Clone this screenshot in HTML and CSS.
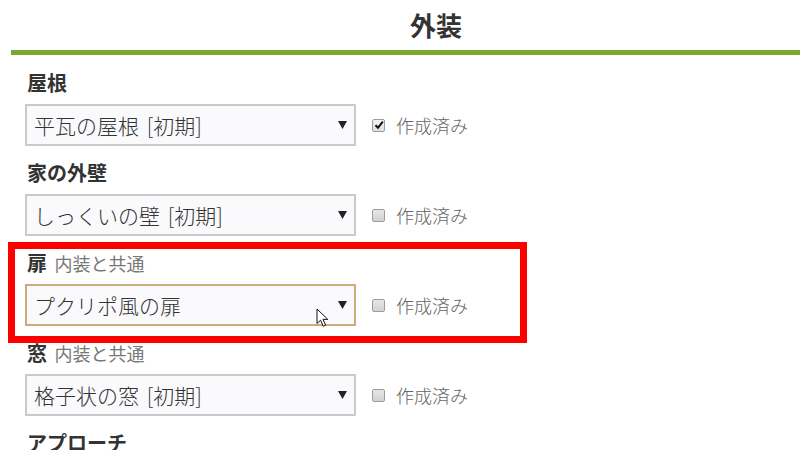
FILE: index.html
```html
<!DOCTYPE html>
<html lang="ja">
<head>
    <meta charset="UTF-8" />
    <title>外装</title>
    <link rel="stylesheet" href="styles.css">
</head>
<body>

    <div class="page">
        <h1 class="title">外装</h1>
        <div class="rule"></div>

        <div class="list">

            <div class="item">
                <div class="label">屋根</div>
                <div class="row">
                    <div class="select">
                        <span class="value">平瓦の屋根 [初期]</span>
                        <svg class="arrow" width="9" height="8" viewBox="0 0 9 8"><polygon points="0,0 9,0 4.5,8" /></svg>
                    </div>
                    <label class="check">
                        <span class="box checked">
                            <svg width="10" height="10" viewBox="0 0 10 10"><path d="M1.5 5.2 L4 7.8 L8.8 1.6" /></svg>
                        </span>
                        作成済み
                    </label>
                </div>
            </div>

            <div class="item">
                <div class="label">家の外壁</div>
                <div class="row">
                    <div class="select">
                        <span class="value">しっくいの壁 [初期]</span>
                        <svg class="arrow" width="9" height="8" viewBox="0 0 9 8"><polygon points="0,0 9,0 4.5,8" /></svg>
                    </div>
                    <label class="check">
                        <span class="box"></span>
                        作成済み
                    </label>
                </div>
            </div>

            <div class="item highlight">
                <div class="label">扉 <span class="note">内装と共通</span></div>
                <div class="row">
                    <div class="select focus">
                        <span class="value">プクリポ風の扉</span>
                        <svg class="arrow" width="9" height="8" viewBox="0 0 9 8"><polygon points="0,0 9,0 4.5,8" /></svg>
                        <svg class="cursor" width="14" height="20" viewBox="0 0 14 20">
                            <path d="M1 1 L1 15.5 L4.6 12.2 L7.2 18.2 L9.6 17.2 L7 11.4 L11.8 11.4 Z" />
                        </svg>
                    </div>
                    <label class="check">
                        <span class="box"></span>
                        作成済み
                    </label>
                </div>
            </div>

            <div class="item">
                <div class="label">窓 <span class="note">内装と共通</span></div>
                <div class="row">
                    <div class="select">
                        <span class="value">格子状の窓 [初期]</span>
                        <svg class="arrow" width="9" height="8" viewBox="0 0 9 8"><polygon points="0,0 9,0 4.5,8" /></svg>
                    </div>
                    <label class="check">
                        <span class="box"></span>
                        作成済み
                    </label>
                </div>
            </div>

            <div class="item">
                <div class="label">アプローチ</div>
            </div>

        </div>
    </div>

</body>
</html>
```

FILE: styles.css
```css
body {
    margin: 0;
    background-color: #ffffff;
    font-family: "Noto Sans CJK JP", "Noto Sans", sans-serif;
    color: #333333;
    overflow: hidden;
}

.page {
    width: 850px;
    padding-left: 11px;
}

.title {
    margin: 7px 0 0 0;
    padding-bottom: 7px;
    font-size: 26px;
    line-height: 36px;
    font-weight: bold;
    text-align: center;
    color: #333333;
}

.rule {
    height: 5px;
    background-color: #7ca632;
}

.list {
    padding-top: 14px;
    padding-left: 14px;
}

.item {
    margin-bottom: 13px;
}

    .item.highlight {
        position: relative;
    }

        .item.highlight::after {
            content: "";
            position: absolute;
            left: -17px;
            top: -7px;
            width: 505px;
            height: 87px;
            border: 7px solid #ff0000;
        }

.label {
    padding-left: 2px;
    font-size: 20px;
    line-height: 28px;
    font-weight: bold;
    color: #333333;
}

    .label .note {
        margin-left: 3px;
        font-size: 18px;
        font-weight: normal;
        color: #777777;
    }

.row {
    display: flex;
    align-items: center;
    margin-top: 7px;
}

.select {
    position: relative;
    box-sizing: border-box;
    width: 331px;
    height: 42px;
    display: flex;
    align-items: center;
    justify-content: space-between;
    padding: 0 7px 0 7px;
    border: 2px solid #cacaca;
    background-color: #fafafd;
}

    .select.focus {
        border-color: #c9ad7a;
    }

    .select .value {
        font-size: 21px;
        font-weight: 300;
        word-spacing: 3px;
        color: #333333;
        white-space: nowrap;
    }

    .select .arrow polygon {
        fill: #222222;
    }

    .select .cursor {
        position: absolute;
        left: 289px;
        top: 22px;
    }

        .select .cursor path {
            fill: #ffffff;
            stroke: #111111;
            stroke-width: 1;
            stroke-linejoin: round;
        }

.check {
    display: flex;
    align-items: center;
    margin-left: 16px;
    font-size: 18px;
    font-weight: 300;
    color: #666666;
}

    .check .box {
        box-sizing: border-box;
        width: 13px;
        height: 13px;
        margin-right: 11px;
        border: 1px solid #9c9c9c;
        border-radius: 2px;
        background: linear-gradient(#e6e6e6, #d2d2d2);
        display: flex;
        align-items: center;
        justify-content: center;
    }

        .check .box.checked {
            background: linear-gradient(#f4f4f4, #dedede);
        }

        .check .box svg path {
            fill: none;
            stroke: #111111;
            stroke-width: 2;
        }
```
